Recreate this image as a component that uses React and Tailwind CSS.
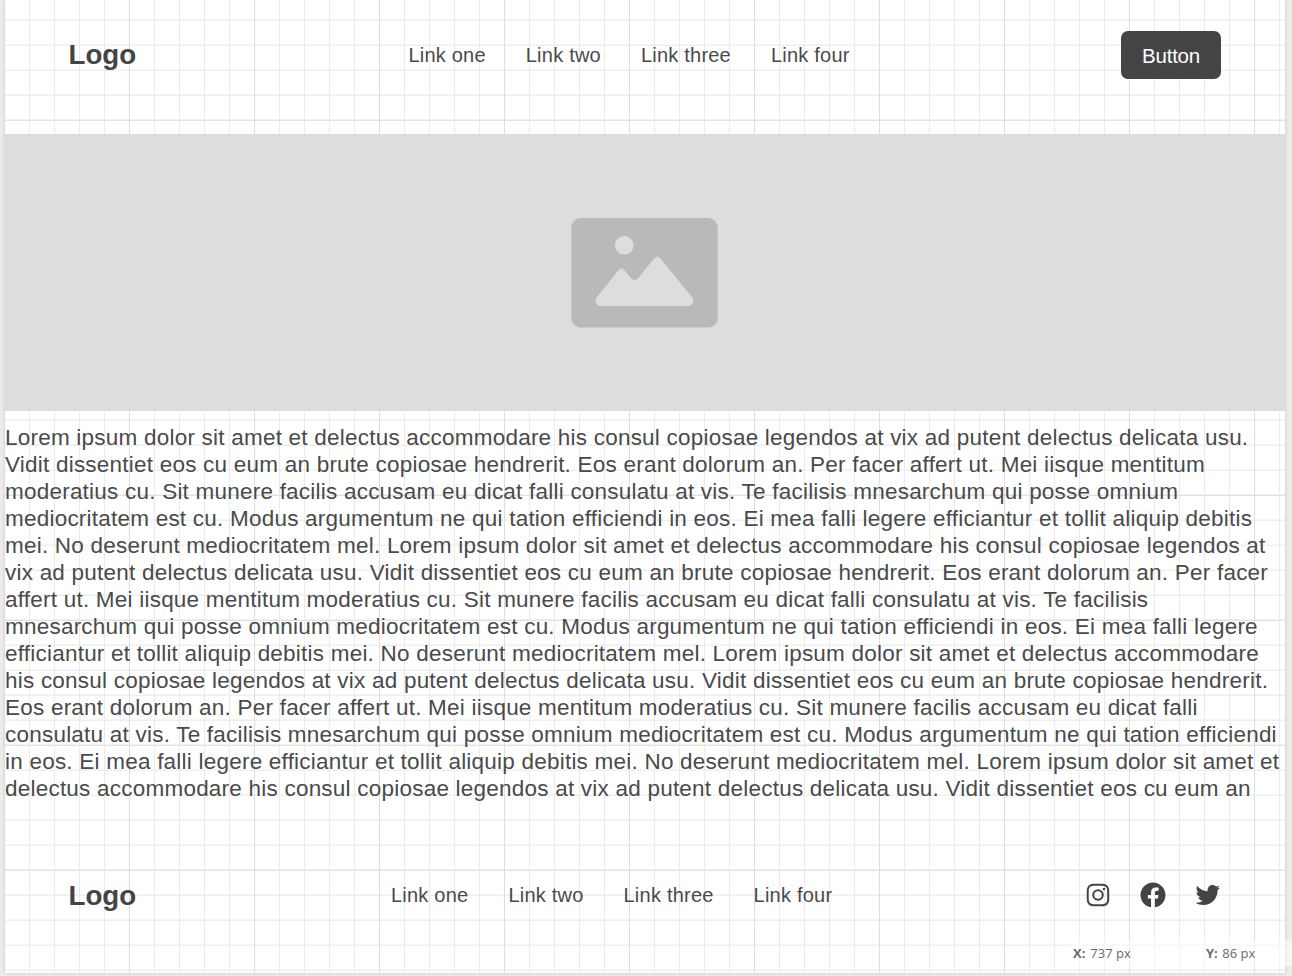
import { BiLogoInstagram, BiLogoFacebookCircle, BiLogoTwitter } from "react-icons/bi";

const LINKS = ["Link one", "Link two", "Link three", "Link four"];

const LINES = [
  "Lorem ipsum dolor sit amet et delectus accommodare his consul copiosae legendos at vix ad putent delectus delicata usu.",
  "Vidit dissentiet eos cu eum an brute copiosae hendrerit. Eos erant dolorum an. Per facer affert ut. Mei iisque mentitum",
  "moderatius cu. Sit munere facilis accusam eu dicat falli consulatu at vis. Te facilisis mnesarchum qui posse omnium",
  "mediocritatem est cu. Modus argumentum ne qui tation efficiendi in eos. Ei mea falli legere efficiantur et tollit aliquip debitis",
  "mei. No deserunt mediocritatem mel. Lorem ipsum dolor sit amet et delectus accommodare his consul copiosae legendos at",
  "vix ad putent delectus delicata usu. Vidit dissentiet eos cu eum an brute copiosae hendrerit. Eos erant dolorum an. Per facer",
  "affert ut. Mei iisque mentitum moderatius cu. Sit munere facilis accusam eu dicat falli consulatu at vis. Te facilisis",
  "mnesarchum qui posse omnium mediocritatem est cu. Modus argumentum ne qui tation efficiendi in eos. Ei mea falli legere",
  "efficiantur et tollit aliquip debitis mei. No deserunt mediocritatem mel. Lorem ipsum dolor sit amet et delectus accommodare",
  "his consul copiosae legendos at vix ad putent delectus delicata usu. Vidit dissentiet eos cu eum an brute copiosae hendrerit.",
  "Eos erant dolorum an. Per facer affert ut. Mei iisque mentitum moderatius cu. Sit munere facilis accusam eu dicat falli",
  "consulatu at vis. Te facilisis mnesarchum qui posse omnium mediocritatem est cu. Modus argumentum ne qui tation efficiendi",
  "in eos. Ei mea falli legere efficiantur et tollit aliquip debitis mei. No deserunt mediocritatem mel. Lorem ipsum dolor sit amet et",
  "delectus accommodare his consul copiosae legendos at vix ad putent delectus delicata usu. Vidit dissentiet eos cu eum an",
];

function Grid() {
  return (
    <svg className="absolute inset-0 h-full w-full" aria-hidden="true">
      <defs>
        <pattern id="grid" width="125" height="125" patternUnits="userSpaceOnUse" x="-1" y="-5">
          {[25, 50, 75, 100].map((p) => (
            <g key={p}>
              <rect x="0" y={p} width="125" height="1" fill="#efefef" />
              <rect x="0" y={p - 1} width="125" height="1" fill="#f6f6f6" />
            </g>
          ))}
          <rect x="0" y="124" width="125" height="1" fill="#f1f1f1" />
          <rect x="0" y="0" width="125" height="1" fill="#e2e2e2" />
          {[25, 50, 75, 100].map((p) => (
            <rect key={p} x={p} y="0" width="1" height="125" fill="#ebebeb" />
          ))}
          <rect x="0" y="0" width="1" height="125" fill="#dedede" />
        </pattern>
      </defs>
      <rect width="100%" height="100%" fill="url(#grid)" />
    </svg>
  );
}

function Logo() {
  return <div className="-ml-[0.5px] text-[27.7px] leading-8 font-bold">Logo</div>;
}

function Nav() {
  return (
    <nav className="flex gap-10 text-[20px] leading-6 tracking-[0.22px] text-[#4a4a4a]">
      {LINKS.map((label) => (
        <a key={label} className="whitespace-nowrap">{label}</a>
      ))}
    </nav>
  );
}

function Placeholder() {
  return (
    <div className="-ml-px flex h-[276.5px] items-start justify-center bg-[#ddd] pt-[84px]">
      <svg width="147" height="110" viewBox="0 0 147 110">
        <rect x="0.3" y="0" width="146.4" height="109.4" rx="9.5" fill="#b9b9b9" />
        <circle cx="53.3" cy="27.3" r="9.3" fill="#ddd" />
        <path
          d="M26 79 L47.5 52.2 Q50.5 48.8 53.5 52.2 L60.3 60.4 Q63.5 63.6 66.8 60.4 L83.2 40.2 Q86.2 37 89.3 40.2 L120.8 79 C124.3 83.3 121.5 88 117 88 H29.8 C25.5 88 22.7 83.3 26 79 Z"
          fill="#ddd"
        />
      </svg>
    </div>
  );
}

export default function App() {
  return (
    <div className="relative h-[976px] w-[1292px] overflow-hidden bg-[#ececec] pl-[5px] font-['Liberation_Sans',Arial,sans-serif] text-[#444]">
      <main className="relative flex h-[973px] w-[1280px] flex-col bg-white shadow-[0_0_4px_rgba(0,0,0,0.16)]">
        <Grid />
        <header className="relative flex h-[134px] items-start pt-[31px] pr-16 pl-16">
          <div className="w-[339.4px] pt-2"><Logo /></div>
          <div className="pt-3"><Nav /></div>
          <button className="ml-auto flex h-12 w-[100px] items-center justify-center rounded-[7px] bg-[#444] pt-[3px] text-[20.5px] tracking-[-0.25px] text-white">
            Button
          </button>
        </header>
        <div className="relative"><Placeholder /></div>
        <section className="relative h-[459.5px] pt-[13.5px] text-[22.5px] leading-[27px] tracking-[0.222px] text-[#4a4a4a]">
          {LINES.map((line, i) => (
            <p key={i} className="whitespace-nowrap">{line}</p>
          ))}
        </section>
        <footer className="relative flex items-start pt-[10px] pr-[62px] pl-16">
          <div className="w-[322px]"><Logo /></div>
          <div className="pt-[3px]"><Nav /></div>
          <div className="ml-auto flex gap-[25px]">
            <BiLogoInstagram size={30} />
            <BiLogoFacebookCircle size={30} />
            <BiLogoTwitter size={30} />
          </div>
        </footer>
      </main>
      <div className="absolute top-[940px] right-0 flex h-[26px] w-[223px] items-center bg-white/50 pt-[2px] pl-1 font-['Open_Sans',sans-serif] text-[13px] text-[#6a6a6a]">
        <span className="w-[133px]"><b className="mr-[1.5px]">X:</b> 737 px</span>
        <span><b className="mr-px">Y:</b> 86 px</span>
      </div>
    </div>
  );
}
